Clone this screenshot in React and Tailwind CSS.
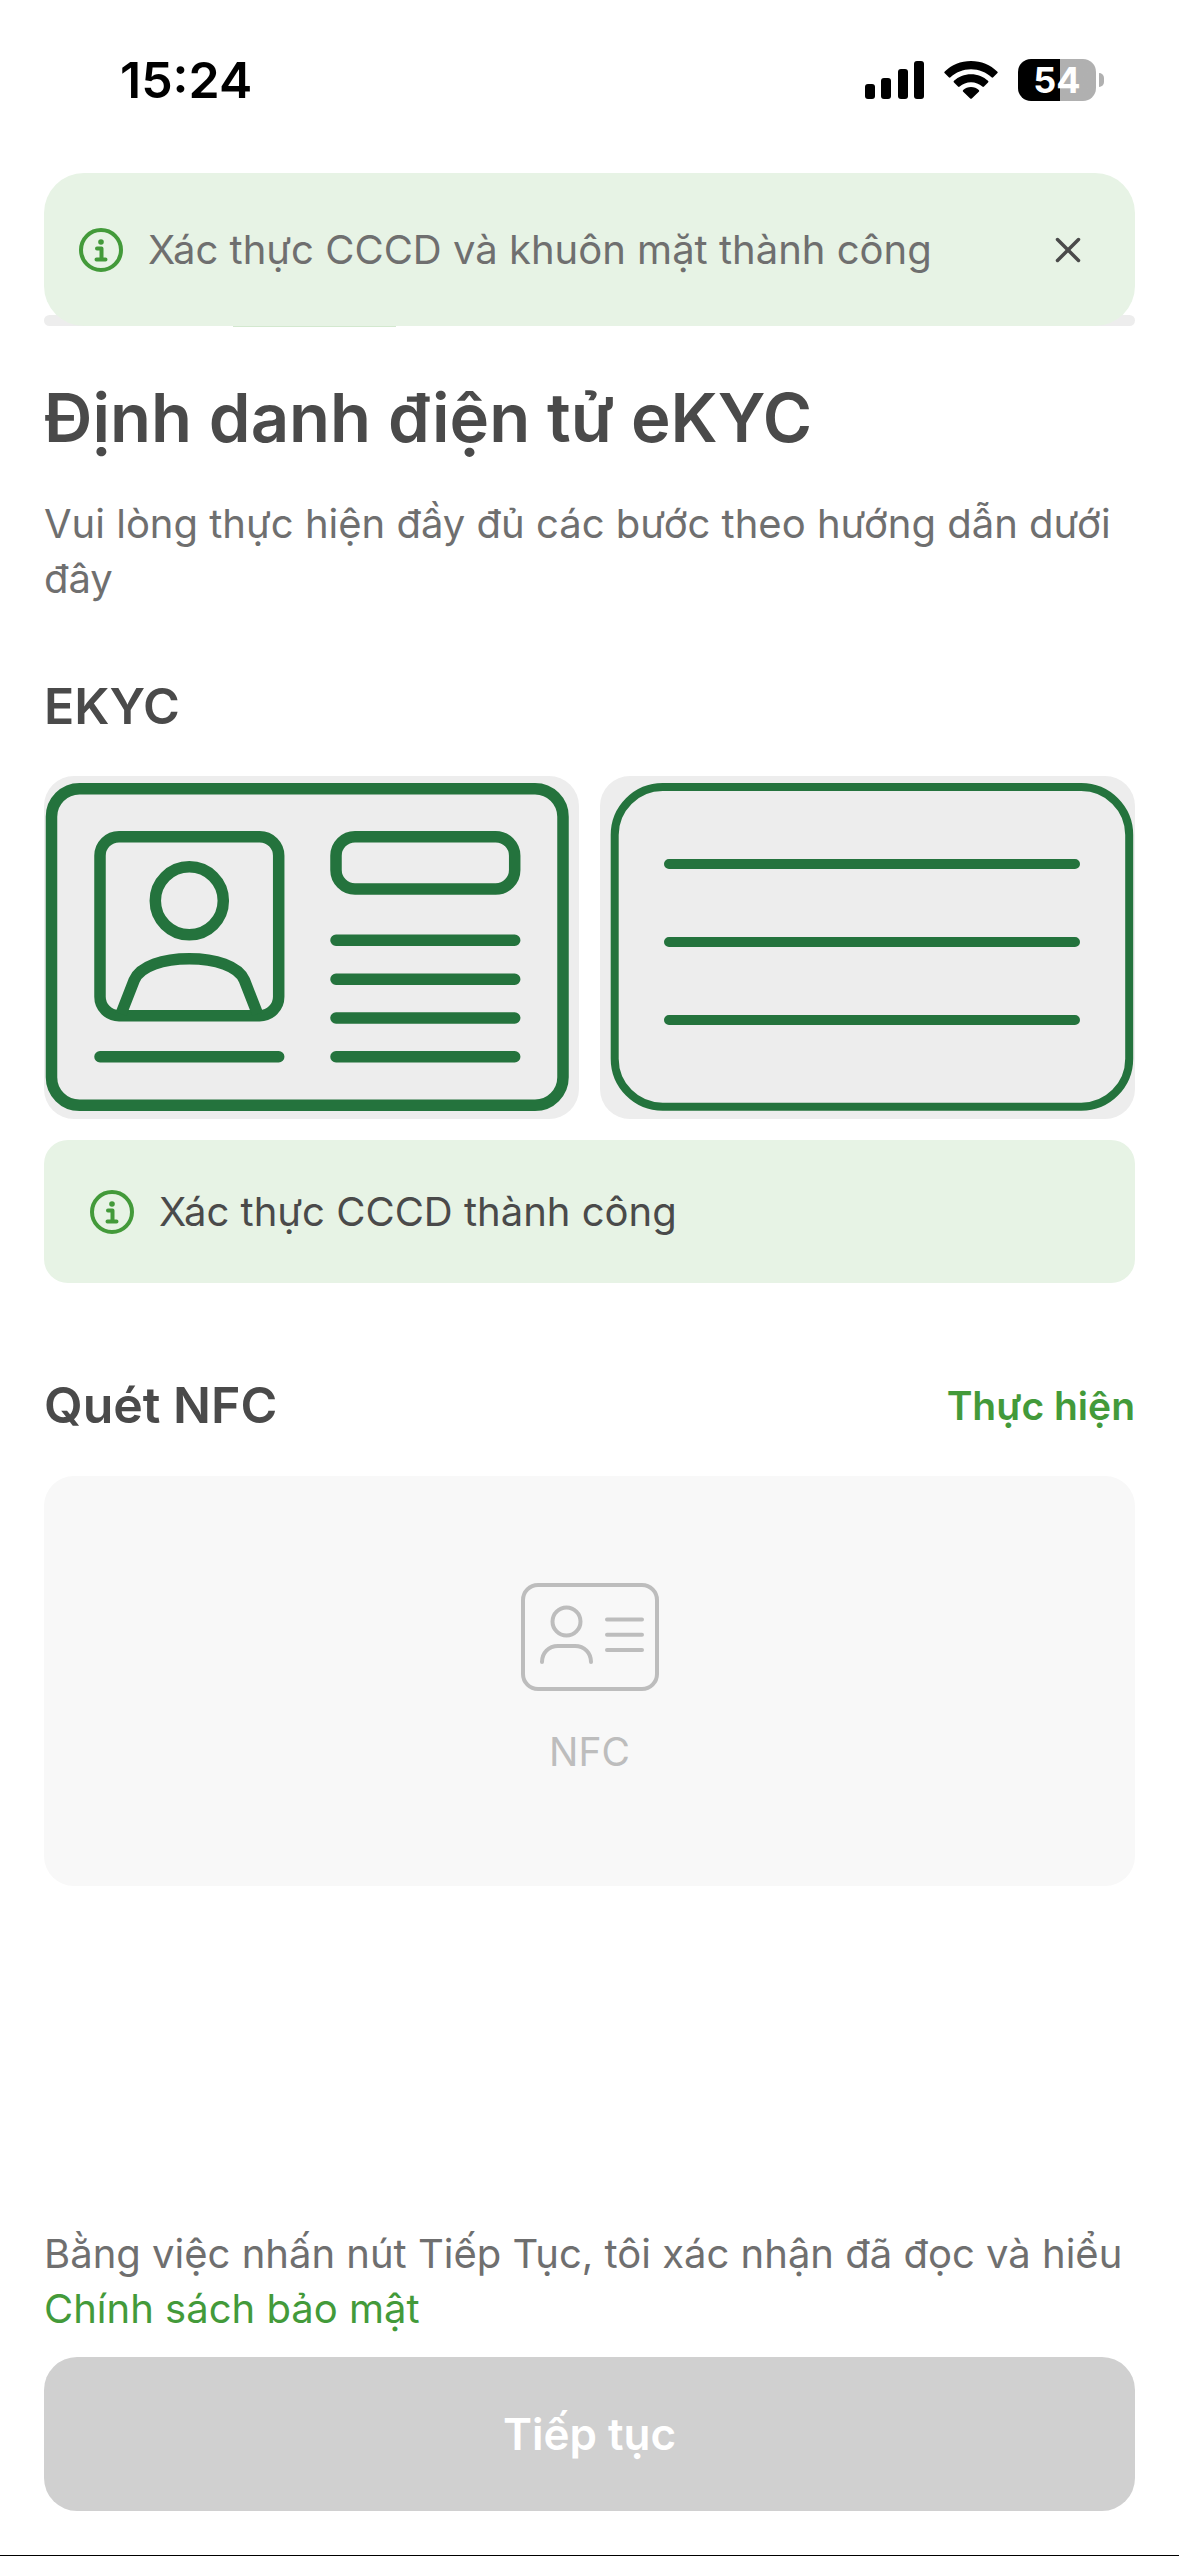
import React from 'react';
import { X } from 'lucide-react';

const StatusBar = () => (
  <div className="flex items-center justify-between pt-[52px] pl-[120px] pr-[75px] h-[108px] text-black">
    <span className="text-[50px] leading-[60px] font-semibold">15:24</span>
    <div className="flex items-center gap-5">
      <svg width="60" height="42" viewBox="0 0 60 42" fill="currentColor">
        <rect x="1" y="25" width="10" height="15" rx="3" />
        <rect x="17" y="19" width="10" height="21" rx="3" />
        <rect x="34" y="10" width="10" height="30" rx="3" />
        <rect x="50" y="2" width="10" height="38" rx="3" />
      </svg>
      <svg width="54" height="42" viewBox="0 0 54 42" fill="currentColor">
        <path d="M27 2C16.800 2 7.500 6 .8 12.500a1.200 1.200 0 0 0 0 1.800l4 4a1.200 1.200 0 0 0 1.700 0C11.800 13.300 19 10.300 27 10.300s15.200 3 20.500 8a1.200 1.200 0 0 0 1.700 0l4-4a1.200 1.200 0 0 0 0-1.800C46.500 6 37.200 2 27 2z" />
        <path d="M27 15.200c-6.600 0-12.600 2.500-17 6.600a1.200 1.200 0 0 0 0 1.800l4 4a1.200 1.200 0 0 0 1.700 0c3-2.700 7-4.300 11.300-4.300s8.300 1.600 11.300 4.300a1.200 1.200 0 0 0 1.700 0l4-4a1.200 1.200 0 0 0 0-1.800c-4.400-4.100-10.400-6.600-17-6.600z" />
        <path d="M27 28c-3 0-5.700 1.100-7.800 2.900a1.200 1.200 0 0 0 0 1.800l7 6.800a1.200 1.200 0 0 0 1.600 0l7-6.800a1.200 1.200 0 0 0 0-1.800C32.700 29.100 30 28 27 28z" />
      </svg>
      <div className="flex items-center gap-[3px]">
        <div className="flex items-center justify-center w-[78px] h-[42px] rounded-[13px] bg-linear-to-r from-black from-54% to-[#b0b0b0] to-54% text-white text-[36px] leading-[42px] font-bold">
          54
        </div>
        <div className="w-[5px] h-[14px] rounded-r-full bg-[#b0b0b0]" />
      </div>
    </div>
  </div>
);

const InfoIcon = () => (
  <svg className="shrink-0" width="44" height="44" viewBox="0 0 44 44" fill="none" stroke="#439a3a" strokeWidth="4">
    <circle cx="22" cy="22" r="20" />
    <path d="M18 20.500h4.500v11M17.500 31.500h9" strokeLinecap="round" strokeLinejoin="round" />
    <circle cx="22" cy="14" r="2.800" fill="#439a3a" stroke="none" />
  </svg>
);

const CardFront = () => (
  <svg className="w-full h-full" viewBox="0 0 535 343" fill="none" stroke="#24733d" strokeWidth="11.500" strokeLinecap="round">
    <rect x="7.500" y="12.700" width="511.500" height="316.600" rx="28" />
    <rect x="56" y="60.700" width="178.700" height="179" rx="19" />
    <circle cx="145.300" cy="124.800" r="34" />
    <path d="M77 238l13.300-34c6-14 29-21.300 55-21.300s49 7.300 55 21.300l13.300 34" strokeLinecap="butt" />
    <rect x="292" y="60.700" width="178.700" height="52.300" rx="19" />
    <path d="M56 280.700h178.700M292 164.300h178.700M292 203.200h178.700M292 242h178.700M292 280.700h178.700" />
  </svg>
);

const CardBack = () => (
  <svg className="w-full h-full" viewBox="0 0 535 343" fill="none" stroke="#24733d" strokeLinecap="round">
    <rect x="14.700" y="11" width="514.500" height="319.700" rx="48" strokeWidth="8" />
    <path d="M69 88h406M69 166h406M69 244h406" strokeWidth="10" />
  </svg>
);

const NfcIcon = () => (
  <svg width="138" height="108" viewBox="0 0 138 108" fill="none" stroke="#bdbdbd" strokeWidth="4" strokeLinecap="round">
    <rect x="2" y="2" width="134" height="104" rx="15" />
    <circle cx="45.500" cy="38.500" r="14" />
    <path d="M21 79c0-9 6.500-16 16-16h17c9.500 0 16 7 16 16" />
    <path d="M86 36.500h35M86 51.700h35M86 67h35" />
  </svg>
);

const App = () => {
  return (
    <div className="relative flex flex-col min-h-screen bg-white border-b border-black font-[Inter,sans-serif] text-[#4a4a4a]">
      <StatusBar />

      <div className="mx-11 mt-[207px] h-[11px] rounded-full bg-[#ededed]">
        <div className="ml-[189px] w-[163px] h-[12px] bg-[#d3e8cf]" />
      </div>
      <div role="status" className="absolute top-[173px] inset-x-11 flex items-center gap-[25px] h-[153px] pl-[35px] pr-[46px] rounded-[40px] bg-[#e7f3e5]">
        <InfoIcon />
        <p className="grow text-[40px] leading-[55px] text-[#6f6f6f]">Xác thực CCCD và khuôn mặt thành công</p>
        <button type="button" aria-label="Đóng">
          <X size={42} strokeWidth={2} />
        </button>
      </div>

      <main className="px-11">
        <h1 className="mt-[52px] text-[67px] leading-[80px] font-semibold">Định danh điện tử eKYC</h1>
        <p className="mt-[38px] text-[40px] leading-[55px] text-[#6f6f6f]">
          Vui lòng thực hiện đầy đủ các bước theo hướng dẫn dưới đây
        </p>

        <h2 className="mt-[70px] text-[50px] leading-[60px] font-semibold">EKYC</h2>
        <div className="grid grid-cols-2 gap-[21px] mt-10">
          <div className="aspect-[535/343] rounded-[30px] bg-[#ededed]">
            <CardFront />
          </div>
          <div className="aspect-[535/343] rounded-[30px] bg-[#ededed]">
            <CardBack />
          </div>
        </div>
        <div className="flex items-center gap-[25px] h-[143px] mt-[21px] px-[46px] rounded-[24px] bg-[#e7f3e5]">
          <InfoIcon />
          <p className="text-[40px] leading-[55px]">Xác thực CCCD thành công</p>
        </div>

        <div className="flex items-center justify-between mt-[92px]">
          <h2 className="text-[50px] leading-[60px] font-semibold">Quét NFC</h2>
          <button type="button" className="text-[39px] leading-[55px] font-semibold text-[#439a3a]">
            Thực hiện
          </button>
        </div>
        <div className="flex flex-col items-center justify-center gap-[33px] h-[410px] mt-[41px] rounded-[30px] bg-[#f8f8f8]">
          <NfcIcon />
          <span className="text-[39px] leading-[55px] text-[#bdbdbd]">NFC</span>
        </div>
      </main>

      <footer className="mt-auto px-11 pb-11">
        <p className="text-[40px] leading-[55px] text-[#6f6f6f]">
          Bằng việc nhấn nút Tiếp Tục, tôi xác nhận đã đọc và hiểu{' '}
          <a href="#privacy" className="text-[#439a3a]">Chính sách bảo mật</a>
        </p>
        <button type="button" disabled className="w-full h-[154px] mt-[21px] rounded-[33px] bg-[#d0d0d0] text-white text-[44px] font-semibold">
          Tiếp tục
        </button>
      </footer>
    </div>
  );
};

export default App;
